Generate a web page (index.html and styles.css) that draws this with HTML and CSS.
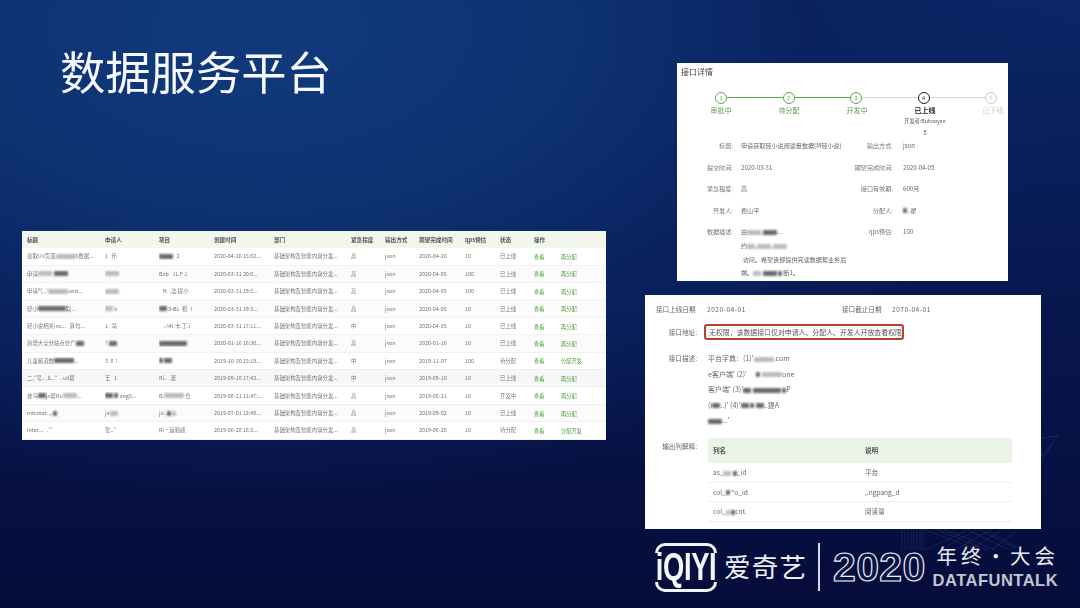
FILE: index.html
```html
<!DOCTYPE html>
<html lang="zh">
<head>
<meta charset="utf-8">
<title>数据服务平台</title>
<link rel="stylesheet" href="styles.css">
</head>
<body>
<main class="slide">
  <svg class="mesh" viewBox="0 0 200 130" aria-hidden="true">
    <g class="mesh-lines">
      <path d="M22 100 V130 M25 100 V130 M28 100 V130 M31 100 V130 M34 100 V130 M37 100 V130 M40 100 V130 M43 100 V130"/>
      <path d="M45 110 L100 130 M52 108 L108 130 M60 108 L116 130 M92 112 L130 130 M100 110 L135 128 M110 112 L142 130"/>
      <path d="M45 130 L92 108 M60 130 L100 108 M75 130 L110 110 M90 130 L122 110 M112 130 L140 108"/>
      <path d="M162 36 L178 16 L160 18 Z M150 60 L172 24"/>
    </g>
  </svg>

  <h1 class="title">数据服务平台</h1>

  <section class="card list-card">
    <div class="trow thead"><span>标题</span><span>申请人</span><span>项目</span><span>创建时间</span><span>部门</span><span>紧急程度</span><span>输出方式</span><span>期望完成时间</span><span>qps预估</span><span>状态</span><span>操作</span><span></span></div>
    <div class="trow"><span>接取UV页面<i class="smear w20"></i>5数据...</span><span>1&nbsp;&nbsp;&nbsp;伟</span><span><i class="smear dark w14"></i>&nbsp;&nbsp;&nbsp;2</span><span>2020-04-26 15:02...</span><span>基础架构及智能内容分发...</span><span>高</span><span>json</span><span>2020-04-26</span><span>10</span><span>已上线</span><a>查看</a><a>再分配</a></div>
    <div class="trow alt"><span>申请<i class="smear w14"></i>&nbsp;&nbsp;<i class="smear dark w14"></i></span><span><i class="smear w14"></i></span><span>Bab&nbsp;&nbsp;&nbsp;JL.F&nbsp;J.</span><span>2020-03-31 20:0...</span><span>基础架构及智能内容分发...</span><span>高</span><span>json</span><span>2020-04-05</span><span>100</span><span>已上线</span><a>查看</a><a>再分配</a></div>
    <div class="trow"><span>申请气.,'<i class="smear w20"></i>uest...</span><span><i class="smear w14"></i></span><span>&nbsp;&nbsp;&nbsp;M&nbsp;&nbsp;.法.提小</span><span>2020-03-31 19:5...</span><span>基础架构及智能内容分发...</span><span>高</span><span>json</span><span>2020-04-05</span><span>100</span><span>已上线</span><a>查看</a><a>再分配</a></div>
    <div class="trow alt"><span>轻小<i class="smear dark w28"></i>取...</span><span><i class="smear w8"></i>&nbsp;k</span><span><i class="smear dark w8"></i>&nbsp;3-BL&nbsp;&nbsp;祝&nbsp;&nbsp;&nbsp;l</span><span>2020-03-31 19:3...</span><span>基础架构及智能内容分发...</span><span>高</span><span>json</span><span>2020-04-05</span><span>10</span><span>已上线</span><a>查看</a><a>再分配</a></div>
    <div class="trow"><span>轻小说相关inc...&nbsp;&nbsp;&nbsp;算句...</span><span>1&nbsp;&nbsp;&nbsp;冯</span><span>&nbsp;&nbsp;&nbsp;&nbsp;.-l4l.卡.丁.i</span><span>2020-03-31 17:11...</span><span>基础架构及智能内容分发...</span><span>中</span><span>json</span><span>2020-04-05</span><span>10</span><span>已上线</span><a>查看</a><a>再分配</a></div>
    <div class="trow alt"><span>新增大全分站点分广<i class="smear dark w8"></i></span><span>?&nbsp;<i class="smear dark w8"></i></span><span><i class="smear dark w28"></i></span><span>2020-01-16 16:30...</span><span>基础架构及智能内容分发...</span><span>高</span><span>json</span><span>2020-01-16</span><span>10</span><span>已上线</span><a>查看</a><a>再分配</a></div>
    <div class="trow"><span>儿童频道数<i class="smear dark w20"></i>...</span><span>3&nbsp;&nbsp;8&nbsp;&nbsp;!</span><span><i class="smear dark w4"></i>&nbsp;<i class="smear dark w8"></i></span><span>2019-10-30 15:19...</span><span>基础架构及智能内容分发...</span><span>中</span><span>json</span><span>2019-11-07</span><span>100</span><span>待分配</span><a>查看</a><a>分配开发</a></div>
    <div class="trow tint"><span>二,"号..  ,lL.."&nbsp;&nbsp;..ull帮</span><span>王&nbsp;&nbsp;&nbsp;1</span><span>Ri..&nbsp;&nbsp;.置</span><span>2019-09-10 17:43...</span><span>基础架构及智能内容分发...</span><span>中</span><span>json</span><span>2019-09-10</span><span>10</span><span>已上线</span><a>查看</a><a>再分配</a></div>
    <div class="trow"><span>蜂鸟<i class="smear dark w8"></i>ja帮Rs.<i class="smear w14"></i>...</span><span><i class="smear dark w8"></i>&nbsp;<i class="smear dark w4"></i>&nbsp;ang0...</span><span>B.<i class="smear w20"></i>&nbsp;仓</span><span>2019-08-21 11:47:...</span><span>基础架构及智能内容分发...</span><span>高</span><span>json</span><span>2019-08-21</span><span>10</span><span>开发中</span><a>查看</a><a>再分配</a></div>
    <div class="trow alt"><span>mtcreat..,.<i class="smear dark w4"></i></span><span>ja<i class="smear w8"></i></span><span>jo..<i class="smear dark w4"></i>.<i class="smear w4"></i></span><span>2019-07-01 12:49...</span><span>基础架构及智能内容分发...</span><span>高</span><span>json</span><span>2019-09-02</span><span>10</span><span>已上线</span><a>查看</a><a>再分配</a></div>
    <div class="trow"><span>Inter...&nbsp;&nbsp;&nbsp;.'''</span><span>张..''</span><span>Ri·运勤感</span><span>2019-06-28 18:3...</span><span>基础架构及智能内容分发...</span><span>高</span><span>json</span><span>2019-06-28</span><span>10</span><span>待分配</span><a>查看</a><a>分配开发</a></div>
  </section>

  <section class="card detail-card">
    <h2 class="detail-title">接口详情</h2>
    <div class="track">
      <b class="dot done">1</b><i class="line done"></i>
      <b class="dot done">2</b><i class="line done"></i>
      <b class="dot done">3</b><i class="line"></i>
      <b class="dot now">4</b><i class="line"></i>
      <b class="dot off">5</b>
    </div>
    <div class="step-labels">
      <span class="lab-done">审批中</span>
      <span class="lab-done">待分配</span>
      <span class="lab-done">开发中</span>
      <span class="lab-now">已上线<small>开发者:Buhaoyan<br>g</small></span>
      <span class="lab-off">已下线</span>
    </div>
    <dl class="form">
      <dt>标题:</dt><dd>申请获取轻小说阅读量数据(M轻小说)</dd><dt>输出方式:</dt><dd>json</dd>
      <dt>提交时间:</dt><dd>2020-03-31</dd><dt>期望完成时间:</dt><dd>2020-04-05</dd>
      <dt>紧急程度:</dt><dd>高</dd><dt>接口有效期:</dt><dd>600月</dd>
      <dt>开发人:</dt><dd>费山平</dd><dt>分配人:</dt><dd><i class="smear dark w4"></i>..翟</dd>
      <dt>数据描述:</dt>
      <dd class="desc">由<i class="smear w14"></i>,<i class="smear dark w14"></i>...<br>约<i class="smear w8"></i>,<i class="smear w14"></i>,<i class="smear w14"></i><br>.访问。希望贵部提供完读数据帮业务后<br>端。<i class="smear w8"></i>&nbsp;<i class="smear dark w14"></i>&nbsp;<i class="smear dark w4"></i>&nbsp;断1。</dd>
      <dt>qps预估:</dt><dd>100</dd>
    </dl>
  </section>

  <section class="card api-card">
    <div class="api-dates">
      <span class="api-k">接口上线日期</span><span class="api-v">2020-04-01</span>
      <span class="api-k2">接口截止日期</span><span class="api-v">2070-04-01</span>
    </div>
    <div class="api-row">
      <span class="api-l">接口地址:</span>
      <span class="alert">无权限，该数据接口仅对申请人、分配人、开发人开放查看权限</span>
    </div>
    <div class="api-row api-desc">
      <span class="api-l">接口描述:</span>
      <p>平台字典：(1)'<i class="smear w20"></i>.com<br>e客户端' (2)'&nbsp;&nbsp;&nbsp;&nbsp;&nbsp;&nbsp;<i class="smear dark w4"></i>&nbsp;<i class="smear w20"></i>one<br>客户端' (3)'<i class="smear dark w8"></i>&nbsp;<i class="smear dark w28"></i>&nbsp;<i class="smear dark w4"></i>P<br>(i<i class="smear dark w8"></i>..)' (4)'<i class="smear dark w8"></i>&nbsp;<i class="smear dark w4"></i>&nbsp;<i class="smear dark w8"></i>..提A<br><i class="smear dark w14"></i>...'</p>
    </div>
    <div class="api-row api-out">
      <span class="api-l">输出列解释:</span>
      <div class="out">
        <div class="out-row out-head"><span>列名</span><span>说明</span></div>
        <div class="out-row"><span>as_<i class="smear w8"></i>&nbsp;<i class="smear dark w4"></i>_id</span><span>平台</span></div>
        <div class="out-row"><span>col_<i class="smear dark w4"></i>&nbsp;*o_id</span><span>,.ngpang_d</span></div>
        <div class="out-row"><span>col_<i class="smear w4"></i>&nbsp;<i class="smear dark w4"></i>cnt</span><span>阅读量</span></div>
      </div>
    </div>
  </section>

  <footer class="brand">
    <div class="iqiyi"><span>iQIYI</span></div>
    <span class="cn-name">爱奇艺</span>
    <i class="brand-sep"></i>
    <span class="year">2020</span>
    <div class="event">
      <span class="event-cn">年终·大会</span>
      <span class="event-en">DATAFUNTALK</span>
    </div>
  </footer>
</main>
</body>
</html>
```

FILE: styles.css
```css
* { box-sizing: border-box; }
html, body { margin: 0; padding: 0; }
body { width: 1080px; height: 608px; overflow: hidden; background: #07103d; }

.slide {
  position: relative;
  width: 1080px;
  height: 608px;
  overflow: hidden;
  font-family: "Noto Sans CJK SC", "Liberation Sans", sans-serif;
  background:
    radial-gradient(ellipse 820px 470px at 260px 30px, #113a7c 0%, #0e3272 38%, #0a2360 66%, rgba(8, 22, 78, 0) 100%),
    linear-gradient(180deg, #0a2766 0%, #07164c 55%, #060c3a 100%);
}

.mesh { position: absolute; left: 880px; top: 420px; width: 200px; height: 130px; }
.mesh-lines path { fill: none; stroke: #6f90c4; stroke-width: .4; opacity: .4; }

.title {
  position: absolute;
  left: 60px;
  top: 37px;
  margin: 0;
  font-size: 45.3px;
  line-height: 66px;
  font-weight: 400;
  color: #f6f8fc;
  white-space: nowrap;
  filter: blur(.3px);
}

.card { position: absolute; background: #fff; color: #555; filter: blur(.5px); }

.smear {
  display: inline-block;
  height: 5px;
  vertical-align: -0.5px;
  background: #b9bcc0;
  filter: blur(.8px);
  border-radius: 1px;
}
.smear.dark { background: #67696d; }
.w4 { width: 4px; }
.w8 { width: 8px; }
.w14 { width: 14px; }
.w20 { width: 20px; }
.w28 { width: 28px; }

/* list */
.list-card { left: 22px; top: 231px; width: 584px; height: 209px; font-size: 5.4px; }
.trow {
  display: grid;
  grid-template-columns: 78px 54px 55px 60px 77px 34px 34px 46px 35px 34px 27px 1fr;
  align-items: center;
  height: 17.4px;
  padding-left: 5px;
  color: #777;
  white-space: nowrap;
  border-bottom: .5px solid #f1f2f0;
}
.trow > span { overflow: hidden; }
.trow.alt { background: #fbfbfb; }
.trow.tint { background: #f5f7f9; }
.trow a { color: #3f9a2b; font-size: 5.2px; }
.thead { height: 17.3px; background: #f2f6ec; color: #555; font-size: 5.6px; font-weight: 700; border: 0; }

/* detail */
.detail-card { left: 677px; top: 63px; width: 331px; height: 218px; overflow: hidden; padding: 3px 4px 0; }
.detail-title { margin: 0; font-size: 8px; line-height: 11px; font-weight: 400; color: #444; }
.track { display: flex; align-items: center; margin: 14.5px 0 0 34px; width: 282px; }
.dot {
  flex: none;
  width: 12px;
  height: 12px;
  border: 1px solid;
  border-radius: 50%;
  font: 400 5.5px/10px "Liberation Sans", sans-serif;
  text-align: center;
}
.dot.done { color: #5fa84c; }
.dot.now { color: #222; }
.dot.off { color: #c8c8c8; }
.line { flex: 1; height: 1px; background: #d4d4d4; }
.line.done { background: #5fa84c; }
.step-labels { display: grid; grid-template-columns: repeat(5, 68px); margin: .5px 0 0 6px; font-size: 7px; line-height: 12px; text-align: center; }
.step-labels small { display: block; font-size: 5.2px; line-height: 10px; font-weight: 400; color: #555; }
.lab-done { color: #5a9e48; }
.lab-now { color: #222; font-weight: 700; }
.lab-off { color: #cfcfcf; }

.form {
  display: grid;
  grid-template-columns: 52px 102px 58px 1fr;
  margin: 3px 0 0;
  font-size: 6.1px;
  line-height: 13.7px;
  color: #666;
}
.form dt { text-align: right; padding-bottom: 7.9px; color: #777; white-space: nowrap; }
.form dd { margin: 0 0 0 8px; padding-bottom: 7.9px; white-space: nowrap; }
.form dd:nth-of-type(even) { margin-left: 10px; }
.form dd.desc { padding-bottom: 0; }

/* api */
.api-card { left: 645px; top: 295px; width: 396px; height: 234px; overflow: hidden; font-size: 6.6px; color: #666; padding-top: 8px; }
.api-dates { display: flex; align-items: center; height: 12px; padding-left: 11px; white-space: nowrap; }
.api-k { width: 51px; }
.api-k2 { width: 50px; margin-left: 94px; }
.api-v { width: 41px; letter-spacing: .5px; }
.api-row { display: flex; align-items: center; margin-top: 9px; white-space: nowrap; }
.api-l { flex: none; width: 52px; text-align: right; }
.alert {
  margin-left: 7px;
  width: 200px;
  height: 16px;
  line-height: 13px;
  padding-left: 3px;
  font-size: 6.9px;
  overflow: hidden;
  color: #555;
  border: 2px solid #b8402f;
  border-radius: 3px;
}
.api-desc { align-items: flex-start; margin-top: 11px; }
.api-desc .api-l { line-height: 15.6px; }
.api-desc p { margin: 0 0 0 11px; line-height: 15.6px; font-size: 7px; }
.api-out { align-items: flex-start; margin-top: 9px; }
.api-out .api-l { line-height: 15px; margin-top: 1px; }
.out { width: 304px; margin-left: 11px; }
.out-row { display: grid; grid-template-columns: 152px 1fr; align-items: center; height: 19.6px; padding-left: 5px; border-bottom: .5px solid #f0f0f0; }
.out-head { height: 25px; background: #e9f3e6; color: #555; font-weight: 700; border: 0; }

/* brand */
.brand { position: absolute; left: 655px; top: 542px; display: flex; align-items: center; height: 50px; color: #eef0f6; white-space: nowrap; }
.iqiyi {
  width: 62px;
  height: 49px;
  border: 3px solid #f2f3f7;
  border-radius: 10px;
  display: flex;
  align-items: center;
  justify-content: center;
}
.iqiyi span {
  flex: none;
  font: 700 38px/29px "Liberation Sans", sans-serif;
  letter-spacing: -.5px;
  color: #f5f6fa;
  background: #07103f;
  padding: 0 2px;
  transform: scaleX(.72);
}
.cn-name { margin-left: 7px; margin-top: -3px; font-size: 26.5px; letter-spacing: 1.2px; color: #eceef4; }
.brand-sep { width: 2px; height: 48px; margin: 0 13px 0 11px; background: #d8dbe5; }
.year { font: 700 41px/50px "Liberation Sans", sans-serif; letter-spacing: .3px; color: #0a1545; -webkit-text-stroke: 1.2px #eef0f6; }
.event { display: flex; flex-direction: column; margin-left: 7px; margin-top: -3px; line-height: 1; }
.event-cn { font-size: 20.5px; letter-spacing: 4px; line-height: 27px; margin: 0 0 3px 4px; color: #e8eaf2; }
.event-en { font: 700 16.5px/17px "Liberation Sans", sans-serif; letter-spacing: .5px; color: #c3c7d2; }
```
